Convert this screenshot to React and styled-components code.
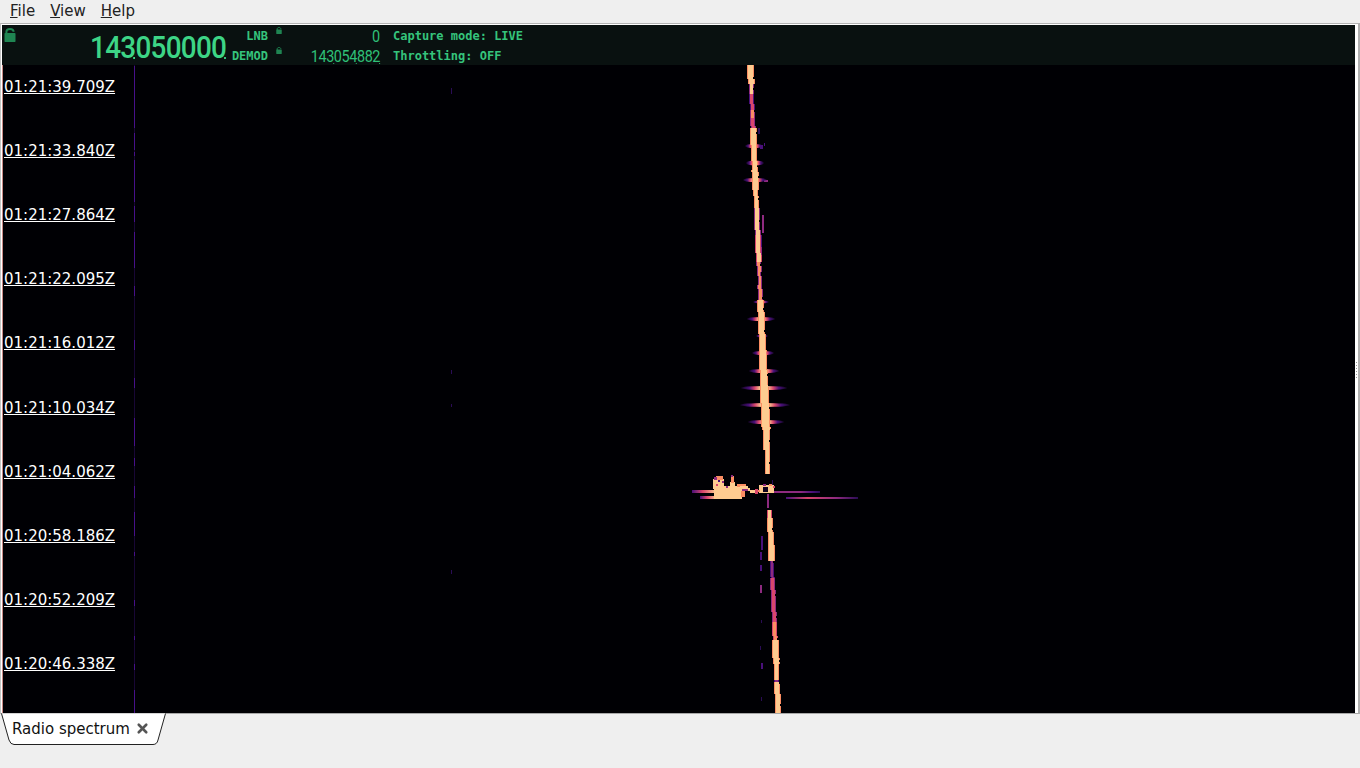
import React from "react";
import styled, { createGlobalStyle } from "styled-components";
import { X } from "lucide-react";

const Global = createGlobalStyle`
  html, body { margin: 0; padding: 0; height: 100%; background: #efefef; overflow: hidden; }
  #root { height: 768px; }
`;
const Page = styled.div`
  width: 1360px; height: 768px; display: flex; flex-direction: column;
  font-family: "DejaVu Sans", sans-serif; background: #efefef;
`;
const MenuBar = styled.nav`
  height: 23px; display: flex; align-items: center; gap: 15px; padding: 0 0 2px 10px; box-sizing: border-box;
  font-size: 15px; color: #222;
`;
const MenuItem = styled.span`
  line-height: 20px;
  &::first-letter { text-decoration: underline; }
`;
const Frame = styled.main`
  height: 691px; box-sizing: border-box; display: flex; flex-direction: column;
  border-top: 1px solid #b4b4b4; border-right: 2px solid #b0b0b0; border-bottom: 1px solid #a8a8a8; border-left: 1px solid #c4c4c4;
  background: #fff; padding: 1px 3px 0 1px; position: relative;
`;
const Header = styled.header`
  height: 40px; flex: none; background: #091110; display: flex; color: #35c47c;
  font-family: "DejaVu Sans Mono", monospace; font-weight: 700; font-size: 12px;
`;
const LockSlot = styled.div`
  width: 88px; flex: none; padding: 3px 0 0 2px; box-sizing: border-box;
`;
const BigFreq = styled.div`
  width: 135px; flex: none; padding-top: 8px; box-sizing: border-box; display: flex; align-items: flex-start;
  font: 500 31px/30px Roboto, sans-serif; letter-spacing: -0.8px; color: #3dd586; white-space: nowrap;
  transform: scaleX(0.9); transform-origin: left top;
`;
const Group = styled.span`
  position: relative; display: block;
  &::after {
    content: ""; position: absolute; right: 0; bottom: ${p => p.$small ? 3 : 4}px;
    width: ${p => p.$small ? 1 : 2}px; height: ${p => p.$small ? 1 : 2}px; background: currentColor;
  }
`;
const Labels = styled.div`
  width: 43px; flex: none; display: flex; flex-direction: column; align-items: flex-end; padding-top: 3px; box-sizing: border-box;
`;
const Line = styled.div`
  height: 20px; flex: none; line-height: 16px; white-space: nowrap;
`;
const Locks = styled.div`
  width: 11px; flex: none; display: flex; flex-direction: column; padding: 2px 0 0 8px; box-sizing: content-box; gap: 13px;
`;
const SmallFreqs = styled.div`
  width: 94px; flex: none; display: flex; flex-direction: column; align-items: flex-end; padding-top: 2px; box-sizing: border-box;
  font: 400 16px/16px Roboto, sans-serif; letter-spacing: -0.45px; color: #2fc078;
`;
const SmallLine = styled.div`
  height: 20px; flex: none; display: flex; line-height: 20px; white-space: nowrap; padding-right: 1px;
  transform: scaleX(0.9); transform-origin: right top;
`;
const Status = styled.div`
  padding: 3px 0 0 12px; display: flex; flex-direction: column;
`;
const Waterfall = styled.section`
  flex: 1; position: relative; background: #000004; overflow: hidden;
`;
const Canvas = styled.svg`
  position: absolute; left: 0; top: 0; display: block;
`;
const Times = styled.div`
  position: relative; display: grid; grid-auto-rows: 64.12px; padding: 11px 0 0 2px;
`;
const Time = styled.a`
  color: #fff; font-size: 15px; line-height: 22px; text-decoration: underline; height: 22px;
`;
const TabBar = styled.div`
  flex: 1; display: flex; align-items: flex-start; padding-left: 1px; margin-top: -1px;
`;
const Tab = styled.div`
  position: relative; width: 166px; height: 32px; display: flex; align-items: center; padding: 0 0 1px 11px; box-sizing: border-box;
  font-size: 15px; color: #111;
`;
const TabShape = styled.svg`
  position: absolute; left: 0; top: 0;
`;
const TabLabel = styled.span`
  position: relative;
`;
const TabClose = styled(X)`
  position: relative; margin-left: 5px; color: #555;
`;
const Grip = styled.div`
  position: absolute; right: 0; top: 338px; width: 3px; display: flex; flex-direction: column; gap: 2px; align-items: center;
`;
const GripDot = styled.i`
  width: 1px; height: 1px; background: #999; display: block;
`;

const Lock = ({ size, color }) => (
  <svg width={size} height={size * 1.17} viewBox="0 0 12 14" style={{ display: "block" }}>
    <path d="M2.4 6V3.8C2.4 2 4 1 6 1s3.6 1 3.6 2.8" fill="none" stroke={color} strokeWidth="2" />
    <rect x="0.5" y="5" width="11" height="9" rx="0.8" fill={color} />
  </svg>
);

const P = { peach: "#fecb90", orange: "#fb8d63", pink: "#d9466c", mag: "#8e2a80", pur: "#49107a", dim: "#2a0c55" };

const segs = [
  [65, 84, 5, P.peach, P.orange], [84, 94, 3, P.peach, P.mag], [94, 110, 3, P.pink, P.pur], [110, 118, 3, P.orange, P.mag],
  [118, 128, 3, P.pink, P.mag], [128, 145, 5, P.peach, P.orange], [145, 170, 4, P.peach, P.orange], [170, 190, 5, P.peach, P.orange],
  [190, 208, 3, P.peach, P.orange], [208, 235, 4, P.peach, P.mag], [235, 262, 4, P.peach, P.pink],
  [262, 272, 3, P.orange, P.mag], [272, 285, 2, P.orange, P.mag], [285, 300, 3, P.orange, P.mag],
  [300, 330, 5, P.peach, P.orange], [330, 350, 5, P.peach, P.orange], [350, 385, 6, P.peach, P.orange],
  [385, 430, 7, P.peach, P.orange], [430, 450, 5, P.peach, P.orange], [450, 474, 3, P.peach, P.orange],
  [510, 518, 3, P.peach, P.pink], [518, 545, 4, P.peach, P.orange], [545, 561, 5, P.peach, P.orange],
  [561, 578, 2, P.mag, P.pur], [578, 600, 3, P.pink, P.mag], [600, 622, 3, P.pink, P.mag], [622, 640, 3, P.orange, P.pink],
  [640, 664, 5, P.peach, P.orange], [664, 680, 3, P.peach, P.orange], [680, 682, 3, P.mag, P.pur], [682, 713, 4, P.peach, P.orange],
];
const traceX = (y) => 750.4 + (y - 65) * 0.0432;

const sides = [
  [146, 9, 4], [163, 9, 5], [180, 12, 4], [302, 8, 3], [319, 14, 4], [336, 6, 3], [353, 11, 4], [371, 15, 4],
  [388, 23, 4], [405, 25, 4], [422, 18, 4],
];

const stripe134 = [[66, 128], [133, 150], [152, 156], [160, 202], [206, 222], [232, 268], [286, 296], [340, 350], [378, 388], [418, 446], [458, 466], [486, 498], [512, 536], [552, 556], [600, 606], [636, 640], [664, 670], [690, 713]];
const specks = [
  [758, 128, 2, 6, P.dim], [760, 145, 3, 4, P.pur], [762, 215, 2, 18, P.mag], [760, 235, 2, 12, P.pur], [760, 247, 2, 10, P.mag], [758, 275, 2, 18, P.mag],
  [761, 536, 2, 14, P.pur], [760, 552, 2, 8, P.pur], [760, 565, 2, 6, P.pur], [760, 585, 2, 8, P.mag], [761, 620, 1, 3, P.dim], [761, 663, 2, 6, P.pur], [760, 646, 1, 4, P.dim], [761, 697, 1, 4, P.dim],
  [451, 88, 1, 6, P.dim], [451, 370, 1, 4, P.dim], [451, 404, 1, 3, P.dim], [451, 570, 1, 4, P.dim], [772, 480, 1, 6, P.dim], [768, 500, 1, 8, P.pur],
  [752, 146, 2, 2, P.mag], [764, 180, 4, 2, P.mag], [764, 143, 1, 3, P.pur],
];
// event blob around t=01:21:01: [x, y, w, h, colour]
const blob = [
  [714, 486, 28, 13, P.peach], [713, 479, 11, 10, P.peach], [716, 476, 7, 4, P.orange], [714, 477, 3, 3, P.mag], [718, 480, 2, 2, P.pur], [722, 481, 2, 2, P.mag], [716, 484, 2, 2, P.pink],
  [730, 482, 5, 7, P.peach], [731, 476, 3, 7, P.orange], [731, 475, 2, 2, P.mag], [726, 486, 2, 2, P.mag], [741, 490, 4, 7, P.orange],
  [737, 484, 9, 3, P.orange], [740, 486, 8, 5, P.peach], [746, 488, 4, 3, P.peach], [742, 489, 6, 2, P.mag],
  [750, 490, 8, 3, P.peach], [755, 489, 3, 5, P.pink],
  [759, 485, 15, 8, P.peach], [763, 487, 5, 5, "#100420"], [763, 484, 3, 2, P.mag], [769, 484, 3, 2, P.orange], [758, 490, 2, 2, P.orange], [773, 486, 2, 2, P.pink], [767, 494, 2, 14, P.mag],
];

const Spectrum = () => (
  <Canvas width="1352" height="648" viewBox="2 65 1352 648">
    <defs>
      <linearGradient id="sb" x1="0" x2="1" y1="0" y2="0">
        <stop offset="0" stopColor={P.pur} stopOpacity="0.2" />
        <stop offset="0.18" stopColor={P.pur} />
        <stop offset="0.3" stopColor={P.pink} />
        <stop offset="0.42" stopColor={P.peach} />
        <stop offset="0.58" stopColor={P.peach} />
        <stop offset="0.7" stopColor={P.pink} />
        <stop offset="0.82" stopColor={P.pur} />
        <stop offset="1" stopColor={P.pur} stopOpacity="0.2" />
      </linearGradient>
      <linearGradient id="lstreak" x1="0" x2="1" y1="0" y2="0">
        <stop offset="0" stopColor={P.pur} />
        <stop offset="0.45" stopColor={P.pink} />
        <stop offset="1" stopColor={P.peach} />
      </linearGradient>
      <linearGradient id="rstreak" x1="0" x2="1" y1="0" y2="0">
        <stop offset="0" stopColor={P.mag} />
        <stop offset="0.6" stopColor={P.mag} />
        <stop offset="0.85" stopColor={P.pur} />
        <stop offset="1" stopColor={P.dim} />
      </linearGradient>
      <linearGradient id="lowstreak" x1="0" x2="1" y1="0" y2="0">
        <stop offset="0" stopColor={P.pur} />
        <stop offset="0.3" stopColor={P.pink} />
        <stop offset="0.7" stopColor={P.mag} />
        <stop offset="1" stopColor={P.dim} />
      </linearGradient>
    </defs>
    <g shapeRendering="crispEdges">
      <rect x="2" y="65" width="1" height="648" fill="#c98a86" />
      <rect x="134" y="65" width="1" height="648" fill="#180735" />
      {stripe134.map(([a, b]) => <rect key={a} x="134" y={a} width="1" height={b - a} fill="#47108a" />)}
      {specks.map(([x, y, w, h, c], i) => <rect key={i} x={x} y={y} width={w} height={h} fill={c} />)}
    </g>
    {sides.map(([y, r, h]) => (
      <ellipse key={y} cx={Math.round(traceX(y))} cy={y} rx={r} ry={h / 2} fill="url(#sb)" />
    ))}
    <g shapeRendering="crispEdges">
      {segs.flatMap(([a, b, w, c, f]) => {
        const rows = [];
        for (let y = a; y < b; y += 2) {
          const x = Math.round(traceX(y) - w / 2);
          const j = (y * 7) % 11 === 0 ? 1 : 0;
          rows.push(<rect key={"f" + y} x={x - 1} y={y} width={w + 2 - j} height={Math.min(2, b - y)} fill={f} />);
          rows.push(<rect key={"c" + y} x={x} y={y} width={w} height={Math.min(2, b - y)} fill={c} />);
        }
        return rows;
      })}
      <rect x="692" y="490" width="24" height="3" fill="url(#lstreak)" />
      <rect x="700" y="496" width="16" height="3" fill="url(#lstreak)" />
      <rect x="772" y="491" width="48" height="2" fill="url(#rstreak)" />
      <rect x="786" y="497" width="72" height="2" fill="url(#lowstreak)" />
      {blob.map(([x, y, w, h, c], i) => <rect key={i} x={x} y={y} width={w} height={h} fill={c} />)}
    </g>
  </Canvas>
);

const times = ["01:21:39.709Z", "01:21:33.840Z", "01:21:27.864Z", "01:21:22.095Z", "01:21:16.012Z", "01:21:10.034Z", "01:21:04.062Z", "01:20:58.186Z", "01:20:52.209Z", "01:20:46.338Z"];

const Digits = ({ groups, small }) => groups.map((g, i) => <Group key={i} $small={small}>{g}</Group>);

export default function App() {
  return (
    <Page>
      <Global />
      <MenuBar>
        <MenuItem>File</MenuItem>
        <MenuItem>View</MenuItem>
        <MenuItem>Help</MenuItem>
      </MenuBar>
      <Frame>
        <Header>
          <LockSlot><Lock size={12} color="#1f8552" /></LockSlot>
          <BigFreq><Digits groups={["143", "050", "000"]} /></BigFreq>
          <Labels>
            <Line>LNB</Line>
            <Line>DEMOD</Line>
          </Labels>
          <Locks>
            <Lock size={6} color="#1f8552" />
            <Lock size={6} color="#1f8552" />
          </Locks>
          <SmallFreqs>
            <SmallLine>0</SmallLine>
            <SmallLine><Digits small groups={["143", "054", "882"]} /></SmallLine>
          </SmallFreqs>
          <Status>
            <Line>Capture mode: LIVE</Line>
            <Line>Throttling: OFF</Line>
          </Status>
        </Header>
        <Waterfall>
          <Spectrum />
          <Times>
            {times.map((t) => <Time key={t}>{t}</Time>)}
          </Times>
        </Waterfall>
        <Grip>{[0, 1, 2, 3, 4, 5].map((i) => <GripDot key={i} />)}</Grip>
      </Frame>
      <TabBar>
        <Tab>
          <TabShape width="166" height="32" viewBox="0 0 166 32">
            <path d="M0.5 0.5 L8 27 Q9.5 31.5 13 31.5 L152 31.5 Q156 31.5 157 27 L164.5 0.5" fill="#fff" stroke="#222" strokeWidth="1" />
          </TabShape>
          <TabLabel>Radio spectrum</TabLabel>
          <TabClose size={15} strokeWidth={4.2} />
        </Tab>
      </TabBar>
    </Page>
  );
}
